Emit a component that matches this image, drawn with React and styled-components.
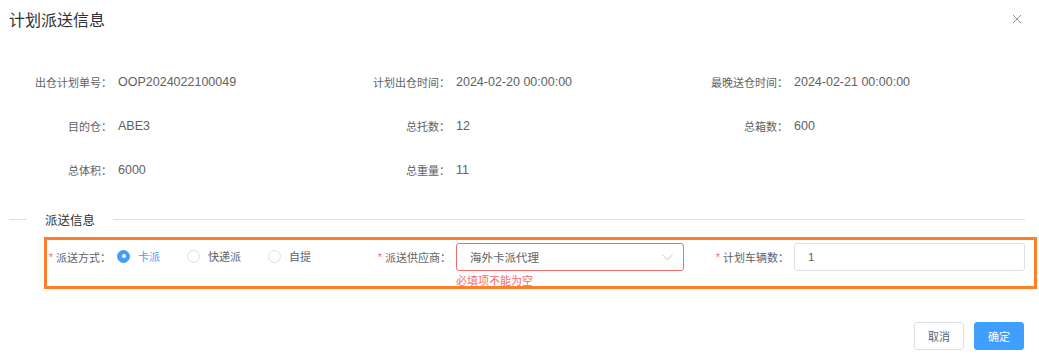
import styled, { createGlobalStyle } from "styled-components";

const GlobalStyle = createGlobalStyle`
    body {
        margin: 0;
        background: #fff;
        font-family: "Liberation Sans", "Noto Sans CJK SC", sans-serif;
        color: #606266;
    }
`;

const infoItems = [
    { label: "出仓计划单号：", value: "OOP2024022100049" },
    { label: "计划出仓时间：", value: "2024-02-20 00:00:00" },
    { label: "最晚送仓时间：", value: "2024-02-21 00:00:00" },
    { label: "目的仓：", value: "ABE3" },
    { label: "总托数：", value: "12" },
    { label: "总箱数：", value: "600" },
    { label: "总体积：", value: "6000" },
    { label: "总重量：", value: "11" },
];

const CloseIcon = () => (
    <svg width="10" height="10" viewBox="0 0 10 10">
        <path d="M1 1 L9 9 M9 1 L1 9" stroke="#909399" strokeWidth="1" fill="none" />
    </svg>
);

const Chevron = () => (
    <svg width="11" height="7" viewBox="0 0 11 7">
        <path d="M0.5 0.8 L5.5 5.8 L10.5 0.8" stroke="#c0c4cc" strokeWidth="1" fill="none" />
    </svg>
);

const Radio = ({ checked, label }) => (
    <RadioItem $checked={checked}>
        <RadioCircle $checked={checked} />
        <span>{label}</span>
    </RadioItem>
);

const App = () => {
    return (
        <Dialog>
            <GlobalStyle />
            <Header>
                <Title>计划派送信息</Title>
                <CloseButton><CloseIcon /></CloseButton>
            </Header>

            <InfoGrid>
                {infoItems.map((item) => (
                    <InfoItem key={item.label}>
                        <InfoLabel>{item.label}</InfoLabel>
                        <InfoValue>{item.value}</InfoValue>
                    </InfoItem>
                ))}
            </InfoGrid>

            <Divider>
                <DividerLine $short />
                <DividerText>派送信息</DividerText>
                <DividerLine />
            </Divider>

            <FormBox>
                <FormItem $width={291} $labelWidth={64}>
                    <FormLabel><Required>*</Required>派送方式：</FormLabel>
                    <RadioGroup>
                        <Radio checked label="卡派" />
                        <Radio label="快递派" />
                        <Radio label="自提" />
                    </RadioGroup>
                </FormItem>
                <FormItem $width={347} $labelWidth={113}>
                    <FormLabel><Required>*</Required>派送供应商：</FormLabel>
                    <FieldColumn>
                        <Field $width={228} $error>
                            <span>海外卡派代理</span>
                            <Chevron />
                        </Field>
                        <ErrorText>必填项不能为空</ErrorText>
                    </FieldColumn>
                </FormItem>
                <FormItem $width={349} $labelWidth={104}>
                    <FormLabel><Required>*</Required>计划车辆数：</FormLabel>
                    <Field $width={231}>
                        <span>1</span>
                    </Field>
                </FormItem>
            </FormBox>

            <Footer>
                <Button>取消</Button>
                <Button $primary>确定</Button>
            </Footer>
        </Dialog>
    );
}

export default App;

const Dialog = styled.div`
    width: 1039px;
    height: 356px;
    background: #fff;
    box-sizing: border-box;
`;

const Header = styled.div`
    height: 42px;
    padding: 0 0 0 9px;
    display: flex;
    align-items: center;
    justify-content: space-between;
`;

const Title = styled.span`
    font-size: 16px;
    color: #303133;
    line-height: 1;
`;

const CloseButton = styled.span`
    display: flex;
    margin-right: 17px;
    margin-top: -4px;
`;

const InfoGrid = styled.div`
    margin-top: 18px;
    display: grid;
    grid-template-columns: repeat(3, 338px);
    grid-auto-rows: 44px;
`;

const InfoItem = styled.div`
    display: flex;
    align-items: center;
`;

const InfoLabel = styled.span`
    width: 112px;
    text-align: right;
    font-size: 11px;
    color: #606266;
`;

const InfoValue = styled.span`
    margin-left: 6px;
    font-size: 12.5px;
    color: #606266;
`;

const Divider = styled.div`
    margin: 18px 14px 0 9px;
    height: 18px;
    display: flex;
    align-items: center;
`;

const DividerLine = styled.div`
    height: 1px;
    background: #dcdfe6;
    ${({ $short }) => $short ? "width: 18px;" : "flex: 1;"}
`;

const DividerText = styled.span`
    padding: 0 18px;
    font-size: 12.5px;
    color: #303133;
`;

const FormBox = styled.div`
    margin: 9px 0 0 44px;
    width: 993px;
    height: 52px;
    box-sizing: border-box;
    border: 3px solid #fd7f2c;
    padding-top: 3px;
    display: flex;
    align-items: flex-start;
`;

const FormItem = styled.div`
    width: ${({ $width }) => $width}px;
    flex-shrink: 0;
    display: flex;
    align-items: flex-start;

    & > label {
        width: ${({ $labelWidth }) => $labelWidth}px;
    }
`;

const FormLabel = styled.label`
    flex-shrink: 0;
    height: 28px;
    display: flex;
    align-items: center;
    justify-content: flex-end;
    font-size: 11px;
    color: #606266;
    margin-right: 5px;
    white-space: nowrap;
`;

const Required = styled.span`
    color: #f56c6c;
    margin-right: 3px;
`;

const RadioGroup = styled.div`
    height: 28px;
    display: flex;
    align-items: center;
    margin-left: 1px;
`;

const RadioItem = styled.div`
    display: flex;
    align-items: center;
    margin-right: 27px;
    font-size: 11px;
    color: ${({ $checked }) => $checked ? "#409eff" : "#606266"};
    margin-top: -2px;

    span {
        margin-left: 8px;
    }
`;

const RadioCircle = styled.div`
    width: 13px;
    height: 13px;
    box-sizing: border-box;
    border-radius: 50%;
    border: 1px solid ${({ $checked }) => $checked ? "#409eff" : "#dcdfe6"};
    background: ${({ $checked }) => $checked ? "#409eff" : "#fff"};
    display: flex;
    align-items: center;
    justify-content: center;

    &::after {
        content: "";
        width: 4px;
        height: 4px;
        border-radius: 50%;
        background: #fff;
        display: ${({ $checked }) => $checked ? "block" : "none"};
    }
`;

const FieldColumn = styled.div`
    display: flex;
    flex-direction: column;
`;

const Field = styled.div`
    width: ${({ $width }) => $width}px;
    flex-shrink: 0;
    height: 28px;
    box-sizing: border-box;
    border: 1px solid ${({ $error }) => $error ? "#f56c6c" : "#dcdfe6"};
    border-radius: 3px;
    padding: 0 10px 0 13px;
    display: flex;
    align-items: center;
    justify-content: space-between;
    font-size: 11.5px;
    color: #606266;
`;

const ErrorText = styled.span`
    margin-top: 3px;
    font-size: 11px;
    line-height: 14px;
    color: #f56c6c;
`;

const Footer = styled.div`
    margin-top: 33px;
    padding-right: 15px;
    display: flex;
    justify-content: flex-end;
    gap: 10px;
`;

const Button = styled.button`
    width: 50px;
    height: 28px;
    box-sizing: border-box;
    border-radius: 3px;
    font-family: inherit;
    font-size: 11px;
    padding: 0;
    border: 1px solid ${({ $primary }) => $primary ? "#409eff" : "#dcdfe6"};
    background: ${({ $primary }) => $primary ? "#409eff" : "#fff"};
    color: ${({ $primary }) => $primary ? "#fff" : "#606266"};
`;
